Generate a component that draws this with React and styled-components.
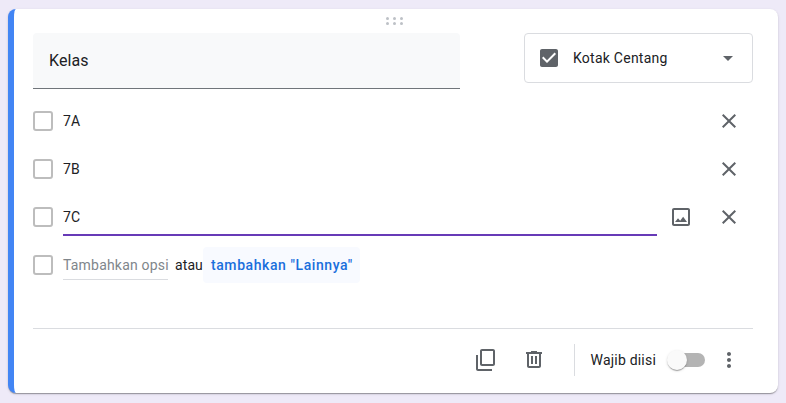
import React from 'react'
import styled, { createGlobalStyle } from 'styled-components'

const GlobalStyle = createGlobalStyle`
    html, body {
        margin: 0;
        height: 100%;
        background: #eeeaf8;
        font-family: Roboto, "Liberation Sans", sans-serif;
        overflow: hidden;
    }
`

const Card = styled.section`
    position: relative;
    box-sizing: border-box;
    width: 770px;
    height: 384px;
    margin: 9px 8px 0;
    padding: 24px 25px 0 19px;
    background: #fff;
    border-left: 6px solid #4285f4;
    border-radius: 8px;
    box-shadow: 0 2px 1px -1px rgba(0, 0, 0, .2), 0 1px 1px 0 rgba(0, 0, 0, .14), 0 1px 3px 0 rgba(0, 0, 0, .12);
`

const DragHandle = styled.svg`
    position: absolute;
    top: 8px;
    left: 372px;
    display: block;
`

const Header = styled.header`
    display: flex;
    justify-content: space-between;
    align-items: flex-start;
    margin-bottom: 8px;
`

const TitleField = styled.div`
    box-sizing: border-box;
    display: flex;
    align-items: center;
    width: 427px;
    height: 56px;
    padding-left: 16px;
    background: #f8f9fa;
    border-bottom: 1px solid #70757a;
    border-radius: 4px 4px 0 0;
    color: #202124;
    font-size: 16px;
    letter-spacing: .1px;
`

const TypeSelect = styled.div`
    box-sizing: border-box;
    display: flex;
    align-items: center;
    width: 229px;
    height: 50px;
    padding: 0 19px 0 12px;
    border: 1px solid #dadce0;
    border-radius: 4px;
    color: #5f6368;
    font-size: 14px;
    letter-spacing: .25px;
`

const TypeLabel = styled.span`
    flex: 1;
    margin-left: 12px;
    color: #202124;
`

const Arrow = styled.span`
    width: 0;
    height: 0;
    border-left: 5px solid transparent;
    border-right: 5px solid transparent;
    border-top: 5px solid #5f6368;
`

const Row = styled.div`
    display: flex;
    align-items: center;
    height: 48px;
`

const Box = styled.span`
    box-sizing: border-box;
    flex: none;
    width: 20px;
    height: 20px;
    margin-right: 10px;
    border: 2px solid #bdbdbd;
    border-radius: 3px;
`

const OptionText = styled.div`
    box-sizing: border-box;
    flex: 1;
    display: flex;
    align-items: center;
    height: 38px;
    color: #202124;
    font-size: 14px;
    letter-spacing: .2px;
    ${p => p.$active && `
        padding-top: 2px;
        border-bottom: 2px solid #673ab7;
    `}
`

const IconButton = styled.button`
    flex: none;
    display: flex;
    align-items: center;
    justify-content: center;
    width: 48px;
    height: 48px;
    padding: 0;
    border: 0;
    background: none;
    color: #5f6368;
`

const AddInput = styled.div`
    box-sizing: border-box;
    display: flex;
    align-items: center;
    width: 105px;
    height: 30px;
    padding-top: 1px;
    border-bottom: 1px solid #dadce0;
    color: #80868b;
    font-size: 14px;
    letter-spacing: .2px;
    white-space: nowrap;
`

const AddGroup = styled.div`
    display: flex;
    align-items: center;
    justify-content: space-between;
    width: 192px;
`

const Or = styled.span`
    margin-left: 7px;
    color: #202124;
    font-size: 14px;
    letter-spacing: .1px;
`

const AddOther = styled.span`
    box-sizing: border-box;
    display: flex;
    align-items: center;
    width: 157px;
    height: 36px;
    padding-left: 8px;
    background: #f8faff;
    border-radius: 4px;
    color: #1a6fdc;
    font-size: 14px;
    font-weight: 500;
    letter-spacing: .58px;
    white-space: nowrap;
`

const Footer = styled.footer`
    display: flex;
    justify-content: flex-end;
    align-items: center;
    height: 61px;
    margin-top: 39px;
    border-top: 1px solid #dadce0;
`

const Separator = styled.span`
    width: 1px;
    height: 32px;
    margin: 0 16px 0 17px;
    background: #dadce0;
`

const RequiredLabel = styled.span`
    margin-right: 11px;
    color: #202124;
    font-size: 14px;
    letter-spacing: .2px;
`

const Toggle = styled.span`
    position: relative;
    width: 38px;
    height: 14px;
    display: flex;
    justify-content: flex-end;
`

const Track = styled.span`
    width: 34px;
    height: 14px;
    border-radius: 7px;
    background: #b4b4b4;
`

const Thumb = styled.span`
    position: absolute;
    top: -3px;
    left: 0;
    width: 20px;
    height: 20px;
    border-radius: 50%;
    background: #fafafa;
    box-shadow: 0 2px 1px -1px rgba(0, 0, 0, .2), 0 1px 1px 0 rgba(0, 0, 0, .14), 0 1px 3px 0 rgba(0, 0, 0, .12);
`

function Icon({ d }) {
    return (
        <svg width="24" height="24" viewBox="0 0 24 24" fill="currentColor">
            <path d={d} />
        </svg>
    )
}

const CLOSE = 'M19 6.41L17.59 5 12 10.59 6.41 5 5 6.41 10.59 12 5 17.59 6.41 19 12 13.41 17.59 19 19 17.59 13.41 12z'
const IMAGE = 'M19 5v14H5V5h14m0-2H5c-1.1 0-2 .9-2 2v14c0 1.1.9 2 2 2h14c1.1 0 2-.9 2-2V5c0-1.1-.9-2-2-2zm-4.86 8.86l-3 3.87L9 13.14 6 17h12l-3.86-5.14z'
const COPY = 'M20 1H9c-1.1 0-2 .9-2 2v13c0 1.1.9 2 2 2h11c1.1 0 2-.9 2-2V3c0-1.1-.9-2-2-2zm0 15H9V3h11v13zM3 7h2v14h14v2H5c-1.1 0-2-.9-2-2V7z'
const TRASH = 'M16 3v1h5v2h-1v12c0 1.1-.9 2-2 2H8c-1.1 0-2-.9-2-2V6H5V4h5V3h6zm2 3H8v12h10V6zM10 8h2v8h-2zM14 8h2v8h-2z'
const DOTS = 'M12 8c1.1 0 2-.9 2-2s-.9-2-2-2-2 .9-2 2 .9 2 2 2zm0 2c-1.1 0-2 .9-2 2s.9 2 2 2 2-.9 2-2-.9-2-2-2zm0 6c-1.1 0-2 .9-2 2s.9 2 2 2 2-.9 2-2-.9-2-2-2z'
const CHECKED = 'M19 3H5c-1.11 0-2 .9-2 2v14c0 1.1.89 2 2 2h14c1.11 0 2-.9 2-2V5c0-1.1-.89-2-2-2zm-9 14l-5-5 1.41-1.41L10 14.17l7.59-7.59L19 8l-9 9z'

function App() {
    return (
        <>
            <GlobalStyle />
            <Card>
                <DragHandle width="17" height="8" viewBox="0 0 17 8" fill="#bdc1c6">
                    {[1.5, 8.5, 15.5].map(x => [1.5, 6.5].map(y => (
                        <circle key={`${x}-${y}`} cx={x} cy={y} r="1.5" />
                    )))}
                </DragHandle>
                <Header>
                    <TitleField>Kelas</TitleField>
                    <TypeSelect>
                        <Icon d={CHECKED} />
                        <TypeLabel>Kotak Centang</TypeLabel>
                        <Arrow />
                    </TypeSelect>
                </Header>
                <Row>
                    <Box />
                    <OptionText>7A</OptionText>
                    <IconButton><Icon d={CLOSE} /></IconButton>
                </Row>
                <Row>
                    <Box />
                    <OptionText>7B</OptionText>
                    <IconButton><Icon d={CLOSE} /></IconButton>
                </Row>
                <Row>
                    <Box />
                    <OptionText $active>7C</OptionText>
                    <IconButton><Icon d={IMAGE} /></IconButton>
                    <IconButton><Icon d={CLOSE} /></IconButton>
                </Row>
                <Row>
                    <Box />
                    <AddInput>Tambahkan opsi</AddInput>
                    <AddGroup>
                        <Or>atau</Or>
                        <AddOther>tambahkan "Lainnya"</AddOther>
                    </AddGroup>
                </Row>
                <Footer>
                    <IconButton><Icon d={COPY} /></IconButton>
                    <IconButton><Icon d={TRASH} /></IconButton>
                    <Separator />
                    <RequiredLabel>Wajib diisi</RequiredLabel>
                    <Toggle>
                        <Track />
                        <Thumb />
                    </Toggle>
                    <IconButton><Icon d={DOTS} /></IconButton>
                </Footer>
            </Card>
        </>
    )
}

export default App
